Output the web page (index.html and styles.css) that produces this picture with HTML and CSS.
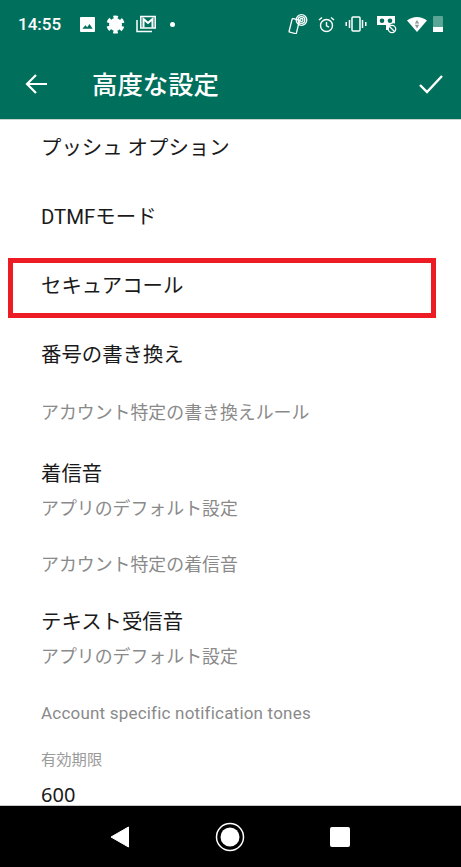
FILE: index.html
```html
<!DOCTYPE html>
<html lang="ja">
<head>
  <meta charset="UTF-8">
  <title>高度な設定</title>
  <link rel="stylesheet" href="styles.css">
</head>
<body>
  <div class="header">
    <div class="status">
      <span class="time">14:55</span>
      <div class="status-left">
        <svg width="15" height="15" viewBox="0 0 16 16"><path fill="#fff" fill-rule="evenodd" d="M1 0h14a1 1 0 0 1 1 1v14a1 1 0 0 1-1 1H1a1 1 0 0 1-1-1V1a1 1 0 0 1 1-1zm1.500 12.500h11l-3.300-5-2.600 3.300-1.800-2z"/></svg>
        <svg width="19" height="19" viewBox="0 0 20 20"><circle cx="10" cy="10" r="6.800" fill="#fff"/><circle cx="10" cy="10" r="7.800" fill="none" stroke="#fff" stroke-width="3.400" stroke-dasharray="4.600 3.570" transform="rotate(73 10 10)"/></svg>
        <svg width="20" height="18" viewBox="0 0 20 18" fill="none" stroke="#fff"><path stroke-width="1.500" d="M1 5v11.500h15"/><rect x="4.800" y="1.500" width="14.400" height="11.500" stroke-width="1.500"/><path stroke-width="2" d="M7.500 12.500V4l4.500 4 4.500-4v8.500"/></svg>
        <span class="dot"></span>
      </div>
      <div class="status-right">
        <svg width="20" height="20" viewBox="0 0 20 20" fill="none" stroke="#fff" stroke-width="1.300"><rect x="2.500" y="5" width="7.500" height="14" rx="1" transform="rotate(14 6 12)"/><circle cx="13.500" cy="6" r="1.500"/><circle cx="13.500" cy="6" r="3.300"/><circle cx="13.500" cy="6" r="5.300"/></svg>
        <svg width="17" height="17" viewBox="0 0 17 17" fill="none" stroke="#fff" stroke-width="1.400"><circle cx="8.500" cy="9.500" r="6"/><path d="M8.500 6v3.800l2.500 1.400M1 4l3-2.500M16 4l-3-2.500"/></svg>
        <svg width="22" height="16" viewBox="0 0 22 16" fill="none" stroke="#fff" stroke-width="1.500"><rect x="7" y="1" width="8" height="14" rx="1"/><path d="M4.500 4v8M1.200 6v4M17.500 4v8M20.800 6v4"/></svg>
        <svg width="20" height="20" viewBox="0 0 20 20"><path fill="#fff" fill-rule="evenodd" d="M0 2h18v7.500a5 5 0 0 0-6 6.500H9v-5H0zm5 2.500a2.300 2.300 0 1 0 0 4.600 2.300 2.300 0 0 0 0-4.600zm8 0a2.300 2.300 0 1 0 0 4.600 2.300 2.300 0 0 0 0-4.600z"/><circle cx="15" cy="15" r="3.700" fill="none" stroke="#fff" stroke-width="1.300"/><path stroke="#fff" stroke-width="1.300" d="M12.500 12.500l5 5"/></svg>
        <svg width="20" height="15" viewBox="0 0 20 15"><path fill="#fff" d="M0 3.500C3 1.200 6.500 0 10 0s7 1.200 10 3.500L10 15z"/><path fill="#8a9a96" d="M10 3l2.200 3.500H7.800zM7.800 7.700h4.400L10 11.500z"/></svg>
        <span class="battery"><span class="battery-cap"></span><span class="battery-level"></span></span>
      </div>
    </div>
    <div class="toolbar">
      <svg width="24" height="24" viewBox="0 0 24 24"><path fill="none" stroke="#fff" stroke-width="2.200" d="M23 12H3M12 3l-9 9 9 9"/></svg>
      <h1>高度な設定</h1>
      <svg width="24" height="20" viewBox="0 0 24 20"><path fill="none" stroke="#fff" stroke-width="2.400" d="M1 11l7 7L23 2"/></svg>
    </div>
  </div>

  <div class="list">
    <div class="row">プッシュ オプション</div>
    <div class="row">DTMFモード</div>
    <div class="row">セキュアコール</div>
    <div class="row">番号の書き換え</div>
    <div class="row-sub">アカウント特定の書き換えルール</div>
    <div class="group">
      <div class="title">着信音</div>
      <div class="sub">アプリのデフォルト設定</div>
    </div>
    <div class="row-sub">アカウント特定の着信音</div>
    <div class="group group-tight">
      <div class="title">テキスト受信音</div>
      <div class="sub">アプリのデフォルト設定</div>
    </div>
    <div class="row-sub latin">Account specific notification tones</div>
    <div class="field-label">有効期限</div>
    <div class="field-value">600</div>
  </div>

  <div class="highlight"></div>

  <div class="nav">
    <svg width="20" height="22" viewBox="0 0 20 22"><path fill="#fff" stroke="#fff" stroke-width="1" stroke-linejoin="round" d="M18.500 1v20L1 11z"/></svg>
    <svg width="30" height="30" viewBox="0 0 30 30"><circle cx="15" cy="15" r="13.500" fill="none" stroke="#fff" stroke-width="1.500"/><circle cx="15" cy="15" r="9.500" fill="#fff"/></svg>
    <span class="nav-square"></span>
  </div>
</body>
</html>
```

FILE: styles.css
```css
html, body {
  height: 100%;
}

body {
  margin: 0;
  background: white;
  font-family: Roboto, "Noto Sans CJK JP", sans-serif;
  color: #1a1a1a;
  display: flex;
  flex-direction: column;
  overflow: hidden;
}

.header {
  height: 120px;
  flex: none;
  background-color: #00705c;
  color: white;
  border-bottom: 1px solid #c9d3d0;
  box-sizing: border-box;
}

.status {
  height: 48px;
  display: flex;
  align-items: center;
  justify-content: space-between;
  padding: 0 18px;
}

.time {
  font-weight: 500;
  font-size: 17px;
  width: 62px;
}

.status-left {
  display: flex;
  align-items: center;
  gap: 11px;
  flex: 1;
}

.status-right {
  display: flex;
  align-items: center;
  gap: 10px;
}

.dot {
  width: 5px;
  height: 5px;
  border-radius: 50%;
  background: white;
  margin-left: 3px;
}

.battery {
  width: 10px;
  height: 16px;
  display: flex;
  flex-direction: column;
  margin-left: -4px;
}

.battery-cap {
  flex: 1;
  background: #5aa596;
  border-radius: 1px 1px 0 0;
}

.battery-level {
  height: 5px;
  background: white;
}

.toolbar {
  height: 71px;
  display: flex;
  align-items: center;
  padding: 0 18px 0 24px;
}

.toolbar h1 {
  margin: 0 0 2px 44px;
  font-size: 25.4px;
  font-weight: 500;
  flex: 1;
}

.list {
  flex: 1;
  overflow: hidden;
  padding-left: 41px;
  font-size: 20.4px;
  margin-top: -6px;
}

.row {
  height: 69px;
  line-height: 69px;
}

.row-sub {
  height: 46px;
  line-height: 46px;
  font-size: 17.9px;
  color: #8a8a8a;
}

.latin {
  font-size: 17px;
  letter-spacing: 0.2px;
}

.group {
  padding-top: 21px;
  padding-bottom: 15px;
}

.group-tight {
  padding-top: 17px;
}

.title {
  line-height: 34px;
}

.sub {
  line-height: 36px;
  font-size: 17.9px;
  color: #8a8a8a;
}

.field-label {
  margin-top: 9px;
  font-size: 15.3px;
  line-height: 30px;
  color: #9a9a9a;
}

.field-value {
  margin-top: 10px;
  line-height: 20px;
  font-family: "Noto Sans", sans-serif;
  font-size: 20px;
}

.highlight {
  position: absolute;
  left: 8px;
  top: 258px;
  width: 428px;
  height: 60px;
  box-sizing: border-box;
  border: 5px solid #ed1c24;
}

.nav {
  height: 62px;
  flex: none;
  background: black;
  display: grid;
  grid-template-columns: 110px 110px 110px;
  justify-content: center;
  justify-items: center;
  align-items: center;
  border-top: 1px solid #c8c8c8;
  box-sizing: border-box;
  padding-right: 2px;
}

.nav-square {
  width: 20px;
  height: 20px;
  background: white;
  border-radius: 2px;
}
```
